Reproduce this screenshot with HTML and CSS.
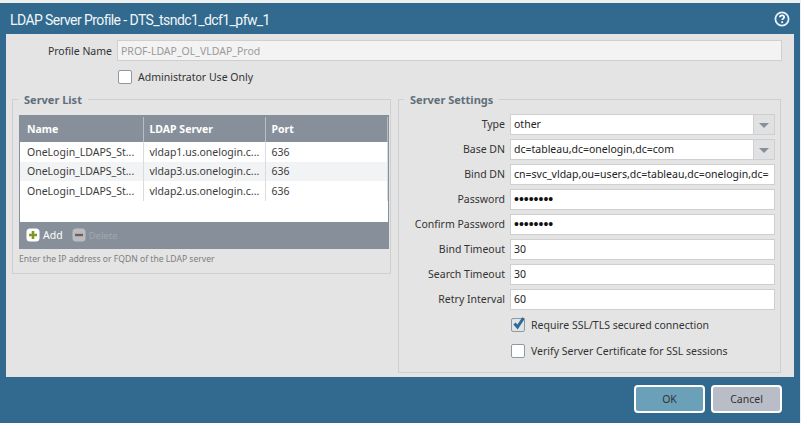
FILE: index.html
```html
<!DOCTYPE html>
<html lang="en">
<head>
  <meta charset="UTF-8" />
  <title>LDAP Server Profile</title>
  <link rel="stylesheet" href="styles.css">
</head>
<body>
  <div class="dialog">
    <header class="titulo">
      <h1>LDAP Server Profile - DTS_tsndc1_dcf1_pfw_1</h1>
      <svg class="ajuda" width="16" height="16" viewBox="0 0 16 16">
        <circle cx="8" cy="8" r="6.600" fill="#2f6a96" stroke="#e8f0f5" stroke-width="1.800"/>
        <path d="M5.900 6.300c0-1.300 1-2 2.200-2s2.100.8 2.100 1.800c0 1.500-2 1.500-2 3" fill="none" stroke="#fff" stroke-width="1.700"/>
        <rect x="7.300" y="10.300" width="1.800" height="1.800" fill="#fff"/>
      </svg>
    </header>

    <main class="painel">
      <div class="linha-perfil">
        <label class="rotulo-perfil">Profile Name</label>
        <input class="campo campo-off" value="PROF-LDAP_OL_VLDAP_Prod" disabled>
      </div>
      <div class="linha-admin">
        <span class="check"></span>
        <span>Administrator Use Only</span>
      </div>

      <div class="colunas">
        <fieldset class="grupo grupo-lista">
          <legend>Server List</legend>
          <div class="tabela">
            <table>
              <thead>
                <tr><th class="col-nome">Name</th><th class="col-server">LDAP Server</th><th>Port</th></tr>
              </thead>
              <tbody>
                <tr><td>OneLogin_LDAPS_St...</td><td>vldap1.us.onelogin.c...</td><td>636</td></tr>
                <tr class="par"><td>OneLogin_LDAPS_St...</td><td>vldap3.us.onelogin.c...</td><td>636</td></tr>
                <tr><td>OneLogin_LDAPS_St...</td><td>vldap2.us.onelogin.c...</td><td>636</td></tr>
              </tbody>
            </table>
            <div class="barra">
              <span class="acao">
                <svg width="14" height="14" viewBox="0 0 14 14">
                  <rect x="0.500" y="0.500" width="13" height="13" rx="3.500" fill="#fff"/>
                  <path d="M7 3v8M3 7h8" stroke="#7c9a22" stroke-width="2.600"/>
                </svg>
                Add
              </span>
              <span class="acao acao-off">
                <svg width="14" height="14" viewBox="0 0 14 14">
                  <rect x="0.500" y="0.500" width="13" height="13" rx="3.500" fill="#b9bdc1"/>
                  <path d="M3 7h8" stroke="#7d5a50" stroke-width="2.400"/>
                </svg>
                Delete
              </span>
            </div>
          </div>
          <p class="dica">Enter the IP address or FQDN of the LDAP server</p>
        </fieldset>

        <fieldset class="grupo grupo-config">
          <legend>Server Settings</legend>
          <div class="linha-form">
            <label>Type</label>
            <div class="combo"><input class="campo" value="other"><span class="seta"></span></div>
          </div>
          <div class="linha-form">
            <label>Base DN</label>
            <div class="combo"><input class="campo" value="dc=tableau,dc=onelogin,dc=com"><span class="seta"></span></div>
          </div>
          <div class="linha-form">
            <label>Bind DN</label>
            <input class="campo campo-dn" value="cn=svc_vldap,ou=users,dc=tableau,dc=onelogin,dc=com">
          </div>
          <div class="linha-form">
            <label>Password</label>
            <input class="campo campo-senha" type="password" value="12345678">
          </div>
          <div class="linha-form">
            <label>Confirm Password</label>
            <input class="campo campo-senha" type="password" value="12345678">
          </div>
          <div class="linha-form">
            <label>Bind Timeout</label>
            <input class="campo" value="30">
          </div>
          <div class="linha-form">
            <label>Search Timeout</label>
            <input class="campo" value="30">
          </div>
          <div class="linha-form">
            <label>Retry Interval</label>
            <input class="campo" value="60">
          </div>
          <div class="linha-check">
            <span class="check check-on">
              <svg width="16" height="16" viewBox="0 0 16 16"><path d="M3.500 7.500l3 3.500 6-9" fill="none" stroke="#2f6a96" stroke-width="3"/></svg>
            </span>
            <span>Require SSL/TLS secured connection</span>
          </div>
          <div class="linha-check">
            <span class="check"></span>
            <span>Verify Server Certificate for SSL sessions</span>
          </div>
        </fieldset>
      </div>
    </main>

    <footer class="rodape">
      <button class="botao botao-ok">OK</button>
      <button class="botao">Cancel</button>
    </footer>
  </div>
</body>
</html>
```

FILE: styles.css
```css
* {
  box-sizing: border-box;
}

body {
  margin: 0;
  height: 423px;
  overflow: hidden;
  background-color: #eef0ee;
  padding-top: 3px;
  font-family: "Noto Sans", sans-serif;
  font-size: 10.5px;
  color: #333;
}

.dialog {
  height: 420px;
  width: 800px;
  background-color: #316a8e;
  padding: 0 6px 0 6px;
  display: flex;
  flex-direction: column;
}

.titulo {
  height: 31px;
  display: flex;
  align-items: center;
  justify-content: space-between;
  padding: 3px 4px 0 4px;
}

.titulo h1 {
  margin: 0;
  font-family: "Roboto", sans-serif;
  font-size: 14px;
  font-weight: 400;
  letter-spacing: -0.58px;
  color: #f2f6f9;
}

.ajuda {
  margin-top: -2px;
}

.painel {
  height: 343px;
  background-color: #e4e4e4;
  padding: 6px 12px 0 6px;
}

.linha-perfil {
  display: flex;
  align-items: center;
  height: 21px;
}

.rotulo-perfil {
  width: 100px;
  margin-right: 5px;
  text-align: right;
}

.linha-perfil .campo {
  flex: 1;
}

.campo {
  height: 21px;
  width: 100%;
  border: 1px solid #cfcfcf;
  background-color: #fff;
  padding: 0 3px;
  font-family: inherit;
  font-size: 10.5px;
  color: #222;
  outline: none;
}

.campo-off {
  background-color: #f3f3f3;
  color: #9a9a9a;
}

.campo-dn {
  padding-right: 5px;
}

.campo-senha {
  font-family: "Liberation Sans", sans-serif;
  font-size: 14px;
  color: #111;
}

.linha-admin {
  display: flex;
  align-items: center;
  gap: 6px;
  margin: 8px 0 0 106px;
  height: 15px;
}

.check {
  width: 14px;
  height: 14px;
  flex: none;
  background-color: #fff;
  border: 1px solid #8d99a3;
  border-radius: 2px;
  position: relative;
}

.check-on {
  background-color: #dfe4e8;
}

.check-on svg {
  position: absolute;
  left: -1px;
  top: -3px;
}

.colunas {
  display: flex;
  gap: 7px;
  margin-top: 8px;
  align-items: flex-start;
}

.grupo {
  margin: 0;
  min-width: 0;
  border: 1px solid #cfcfcf;
}

.grupo legend {
  padding: 0 6px;
  font-weight: 700;
  color: #606f7b;
  font-size: 11px;
}

.grupo-lista {
  width: 379px;
  height: 182px;
  padding: 8px 6px 0 6px;
}

.grupo-lista legend {
  margin-left: -1px;
}

.grupo-config {
  width: 383px;
  height: 281px;
  padding: 7px 5px 0 0;
}

.grupo-config legend {
  margin-left: 5px;
}

.tabela {
  border: 1px solid #87909a;
  border-top-width: 2px;
  background-color: #fff;
  width: 370px;
}

.tabela table {
  width: 100%;
  height: 84px;
  border-collapse: collapse;
  table-layout: fixed;
}

.tabela tr {
  height: 19px;
}

.tabela thead tr {
  height: 25px;
}

.tabela th {
  background-color: #87909a;
  color: #fff;
  font-weight: 700;
  text-align: left;
  padding: 0 0 2px 6px;
  border-right: 1px solid #b9bec3;
}

.tabela th:first-child {
  padding-left: 7px;
}

.col-nome,
.col-server {
  width: 122px;
}

.tabela th.col-nome {
  width: 123px;
}

.tabela td {
  padding: 0 0 0 6px;
  border-right: 1px solid #d9dcdf;
  white-space: nowrap;
  overflow: hidden;
  color: #3c3c3c;
}

.tabela td:first-child {
  padding-left: 7px;
}

.tabela .par {
  background-color: #f2f3f5;
}

.barra {
  height: 26px;
  margin-top: 21px;
  background-color: #87909a;
  display: flex;
  align-items: center;
  gap: 9px;
  padding-left: 6px;
}

.acao {
  display: flex;
  align-items: center;
  gap: 3px;
  color: #fff;
}

.acao-off {
  color: #a0a7ad;
  font-size: 9.5px;
}

.dica {
  margin: 4px 0 0;
  font-size: 8.6px;
  color: #7d7d7d;
}

.linha-form {
  display: flex;
  align-items: center;
  height: 20px;
  margin-bottom: 5px;
}

.linha-form label {
  width: 106px;
  margin-right: 5px;
  text-align: right;
  flex: none;
}

.combo {
  flex: 1;
  display: flex;
}

.seta {
  width: 21px;
  height: 21px;
  flex: none;
  background-color: #dfe1e3;
  border: 1px solid #cfcfcf;
  border-left: none;
  position: relative;
}

.seta::after {
  content: "";
  position: absolute;
  left: 5px;
  top: 8px;
  border-left: 5px solid transparent;
  border-right: 5px solid transparent;
  border-top: 5px solid #87909a;
}

.linha-check {
  display: flex;
  align-items: center;
  gap: 6px;
  margin-left: 112px;
  height: 15px;
  margin-bottom: 11px;
}

.linha-form + .linha-check {
  margin-top: 8px;
}

.rodape {
  flex: 1;
  display: flex;
  justify-content: flex-end;
  gap: 6px;
  padding: 8px 12px 0 0;
}

.botao {
  width: 71px;
  height: 28px;
  border: 2px solid #fff;
  border-radius: 4px;
  background-color: #b9bdc7;
  font-family: inherit;
  font-size: 10.5px;
  color: #333;
}

.botao-ok {
  background-color: #6ba0b9;
}
```
